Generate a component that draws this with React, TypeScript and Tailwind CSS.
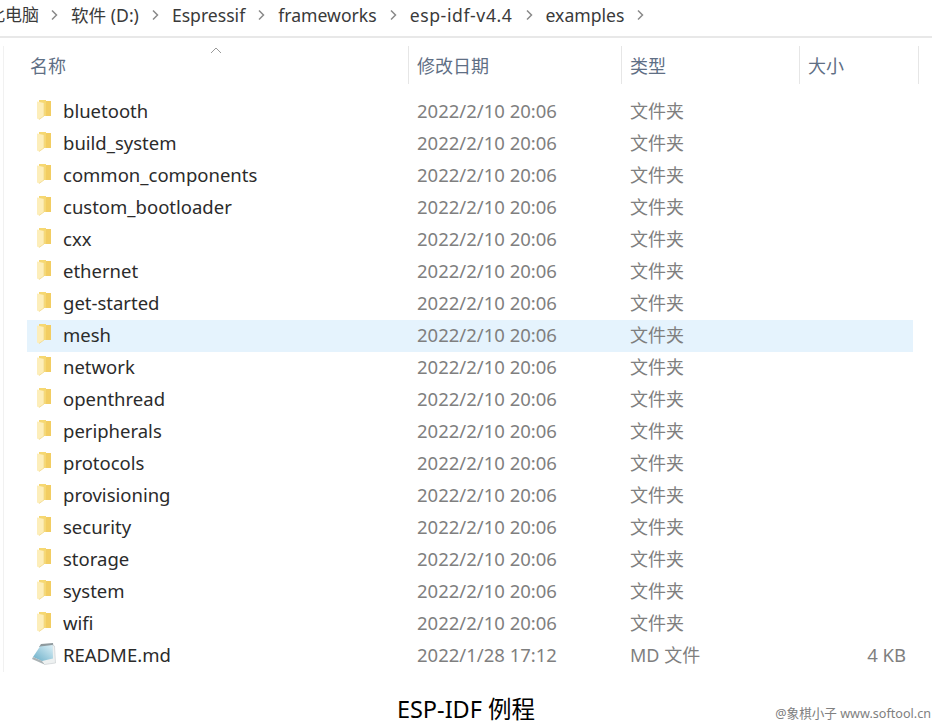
const font = "[font-family:'Noto_Sans','Noto_Sans_CJK_SC',sans-serif]";

const crumbs = ["软件 (D:)", "Espressif", "frameworks", "esp-idf-v4.4", "examples"];

const folders = [
  "bluetooth",
  "build_system",
  "common_components",
  "custom_bootloader",
  "cxx",
  "ethernet",
  "get-started",
  "mesh",
  "network",
  "openthread",
  "peripherals",
  "protocols",
  "provisioning",
  "security",
  "storage",
  "system",
  "wifi",
];

function Chevron() {
  return (
    <svg width="7" height="12" viewBox="0 0 7 12" fill="none" className="shrink-0">
      <path d="M1 1.500 5.500 6 1 10.500" stroke="#8a8a8a" strokeWidth="1.5" />
    </svg>
  );
}

function FolderIcon() {
  return (
    <svg width="14" height="20" viewBox="0 0 14 20" className="mb-[2px] shrink-0">
      <path d="M2 0h7v16H2z" fill="#f6d873" />
      <path d="M9 1h5v15H9z" fill="#f2cd62" />
      <path d="M0 1.500l7 1.500v13l-5 3.500-2-1z" fill="#fdeeba" />
      <path d="M7 3v13l-5 3.500" fill="none" stroke="#f3d98a" strokeWidth="0.8" />
    </svg>
  );
}

function FileIcon() {
  return (
    <svg width="24" height="22" viewBox="0 0 24 22" className="mb-[2px] shrink-0">
      <defs>
        <linearGradient id="page" x1="1" y1="0" x2="0" y2="1">
          <stop offset="0" stopColor="#dcf0f7" />
          <stop offset="1" stopColor="#69aec8" />
        </linearGradient>
      </defs>
      <path d="M9 1 21 0l.5 4H7z" fill="#8f9a9e" />
      <path d="M20 2l2.500 1 1 17-11 1.500-4-4L20 14z" fill="#eef1f1" stroke="#c4cacc" strokeWidth="0.6" />
      <path d="M8 3.500 20.500 2 21 15.500 10 18 1 14z" fill="url(#page)" />
      <path d="M1 14l9 4 2.500 3.500L0 16z" fill="#aab3b6" />
    </svg>
  );
}

function Row({ name, date, type, size, icon, active }: { name: string; date: string; type: string; size?: string; icon: React.ReactNode; active?: boolean }) {
  return (
    <div className={`flex h-8 w-[886px] items-center pb-[2px] text-[18.500px] ${active ? "bg-[#e5f3fd]" : ""}`}>
      <div className="flex w-[36px] shrink-0 justify-center pr-[2px]">{icon}</div>
      <div className="w-[354px] shrink-0 text-[#2b2b2b]">{name}</div>
      <div className="w-[213px] shrink-0 text-[#7f7f7f]">{date}</div>
      <div className="w-[180px] shrink-0 text-[18px] text-[#7f7f7f]">{type}</div>
      <div className="w-[96px] shrink-0 text-right text-[#7f7f7f]">{size}</div>
    </div>
  );
}

function HeaderCell({ label, width }: { label: string; width: string }) {
  return (
    <div className={`flex h-[38px] shrink-0 items-center border-r border-[#e6e6e6] pl-[8px] pt-[2px] text-[18px] text-[#5f6f85] ${width}`}>
      {label}
    </div>
  );
}

export default function App() {
  return (
    <div className={`h-[726px] w-[932px] overflow-hidden bg-white ${font}`}>
      <div className="flex h-[38px] items-center gap-[13px] overflow-hidden whitespace-nowrap border-b-2 border-[#e8e8e8] pb-[6px] text-[17.600px] text-[#3a3a3a]">
        <span className="ml-[-12px] mr-[-1px] text-[17px]">此电脑</span>
        <Chevron />
        {crumbs.map((c) => (
          <div key={c} className="flex items-center gap-[13px]">
            <span className={c === "esp-idf-v4.4" ? "tracking-[0.6px]" : ""}>{c}</span>
            <Chevron />
          </div>
        ))}
      </div>

      <div className="ml-[3px] mt-[8px] border-l border-[#f1f1f1] pl-[18px]">
        <div className="relative flex">
          <HeaderCell label="名称" width="w-[387px]" />
          <HeaderCell label="修改日期" width="w-[213px]" />
          <HeaderCell label="类型" width="w-[178px]" />
          <HeaderCell label="大小" width="w-[119px]" />
          <svg width="12" height="7" viewBox="0 0 12 7" fill="none" className="absolute left-[188px] top-[1px]">
            <path d="M1 6l5-5 5 5" stroke="#9a9a9a" strokeWidth="1" />
          </svg>
        </div>

        <div className="ml-[5px] mt-[12px]">
          {folders.map((f) => (
            <Row key={f} name={f} date="2022/2/10 20:06" type="文件夹" icon={<FolderIcon />} active={f === "mesh"} />
          ))}
          <Row name="README.md" date="2022/1/28 17:12" type="MD 文件" size="4 KB" icon={<FileIcon />} />
        </div>
      </div>

      <div className="relative mt-[21px] text-center text-[23.500px] leading-[32px] text-black">
        ESP-IDF 例程
        <span className="absolute right-[1px] top-[13px] text-[12.600px] leading-[16px] text-[#808080]">@象棋小子 www.softool.cn</span>
      </div>
    </div>
  );
}
